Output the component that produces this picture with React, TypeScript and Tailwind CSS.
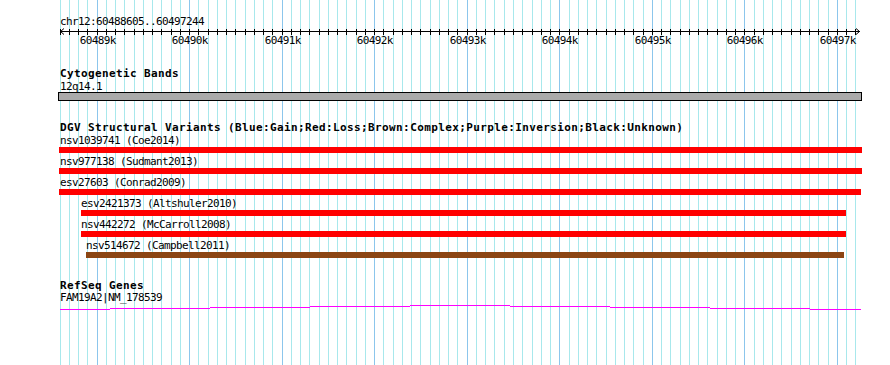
import type { FC } from "react";

// region shown: chr12:60488605..60497244, drawn across x 59.5 → ~859
const START = 60488600;
const PX_PER_BP = 0.09255;
const xOf = (bp: number) => Math.round(59.5 + (bp - START) * PX_PER_BP);

const gridBps: number[] = [];
for (let b = START; b <= 60497200; b += 100) gridBps.push(b);

const majors = [60489, 60490, 60491, 60492, 60493, 60494, 60495, 60496, 60497];

const mono = "font-['DejaVu_Sans_Mono','Liberation_Mono',monospace]";

interface Variant {
  name: string;
  from: number;
  to: number;
  color: string;
}

const variants: Variant[] = [
  { name: "nsv1039741 (Coe2014)", from: 59, to: 862, color: "#ff0000" },
  { name: "nsv977138 (Sudmant2013)", from: 59, to: 862, color: "#ff0000" },
  { name: "esv27603 (Conrad2009)", from: 59, to: 861, color: "#ff0000" },
  { name: "esv2421373 (Altshuler2010)", from: 81, to: 846, color: "#ff0000" },
  { name: "nsv442272 (McCarroll2008)", from: 81, to: 846, color: "#ff0000" },
  { name: "nsv514672 (Campbell2011)", from: 86, to: 844, color: "#8b4513" },
];

// gene model, drawn as stepped 1px segments
const geneSegs: [number, number, number][] = [
  [59, 110, 309],
  [110, 210, 308],
  [210, 310, 307],
  [310, 410, 306],
  [410, 510, 305],
  [510, 610, 306],
  [610, 710, 307],
  [710, 810, 308],
  [810, 861, 309],
];

const Grid: FC = () => (
  <svg className="absolute inset-0" width={890} height={365}>
    {gridBps.map((b) => (
      <line
        key={b}
        x1={xOf(b) + 0.5}
        x2={xOf(b) + 0.5}
        y1={0}
        y2={365}
        stroke={b % 1000 === 0 ? "#8cc6ec" : "#a8e8ec"}
        strokeWidth={1}
      />
    ))}
  </svg>
);

const Ruler: FC = () => (
  <svg width={810} height={20} viewBox="60 28 810 20" className="block">
    <line x1={60} x2={860} y1={31.5} y2={31.5} stroke="#000" strokeWidth={1} />
    {gridBps.map((b) => (
      <line key={b} x1={xOf(b) + 0.5} x2={xOf(b) + 0.5} y1={29} y2={35} stroke="#000" strokeWidth={1} />
    ))}
    <polyline points="64,28.5 60.5,31.5 64,34.5" fill="none" stroke="#000" strokeWidth={1} />
    <polyline points="856,28.5 859.5,31.5 856,34.5" fill="none" stroke="#000" strokeWidth={1} />
    {majors.map((k) => (
      <text
        key={k}
        x={xOf(k * 1000) + 0.8}
        y={44.3}
        textAnchor="middle"
        fontFamily="DejaVu Sans Mono, Liberation Mono, monospace"
        fontSize={11}
        letterSpacing={-0.62}
        fill="#000"
      >
        {k}k
      </text>
    ))}
  </svg>
);

const Title: FC<{ text: string; className?: string }> = ({ text, className = "" }) => (
  <div className={`text-[11px] font-bold tracking-[0.38px] leading-[13px] whitespace-pre ${className}`}>{text}</div>
);

export default function App() {
  return (
    <div className={`relative w-[890px] h-[365px] overflow-hidden bg-white text-black ${mono}`}>
      <Grid />

      <div className="relative flex flex-col pt-[15px] pl-[60px] text-[11px] tracking-[-0.62px] leading-[13px]">
        {/* ruler */}
        <div className="whitespace-pre">chr12:60488605..60497244</div>
        <Ruler />

        {/* Cytogenetic bands */}
        <Title text="Cytogenetic Bands" className="mt-[19px]" />
        <div className="whitespace-pre">12q14.1</div>
        <div className="-mt-[1px] -ml-[2px] w-[804px] h-[9px] border border-black bg-[#aaaaaa]" />

        {/* DGV */}
        <Title
          text="DGV Structural Variants (Blue:Gain;Red:Loss;Brown:Complex;Purple:Inversion;Black:Unknown)"
          className="mt-[20px]"
        />
        {variants.map((v) => (
          <div key={v.name} className="flex flex-col mb-[2px]">
            <div className="h-[13px] whitespace-pre" style={{ marginLeft: v.from < 60 ? 0 : v.from - 60 }}>
              {v.name}
            </div>
            <div
              className="h-[6px]"
              style={{ marginLeft: v.from - 60, width: v.to - v.from, background: v.color }}
            />
          </div>
        ))}

        {/* RefSeq */}
        <Title text="RefSeq Genes" className="mt-[19px]" />
        <div className="-mt-[1px] whitespace-pre">FAM19A2|NM_178539</div>
        <svg width={810} height={8} viewBox="60 304 810 8" className="block">
          {geneSegs.map(([a, b, y]) => (
            <line key={a} x1={a} x2={b} y1={y + 0.5} y2={y + 0.5} stroke="#ff00ff" strokeWidth={1} />
          ))}
        </svg>
      </div>
    </div>
  );
}
